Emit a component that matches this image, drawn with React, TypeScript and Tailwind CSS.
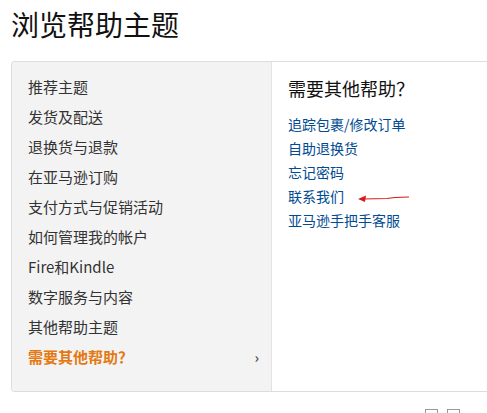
import React from "react";

const TOPICS = [
  "推荐主题",
  "发货及配送",
  "退换货与退款",
  "在亚马逊订购",
  "支付方式与促销活动",
  "如何管理我的帐户",
  "Fire和Kindle",
  "数字服务与内容",
  "其他帮助主题",
];

const HELP_LINKS = ["追踪包裹/修改订单", "自助退换货", "忘记密码", "联系我们", "亚马逊手把手客服"];

const FONT = { fontFamily: '"Microsoft YaHei", "Noto Sans CJK SC", "Noto Sans", sans-serif' };

export default function App() {
  return (
    <div className="w-[487px] h-[413px] overflow-hidden bg-white pl-[11px]" style={FONT}>
      <h1 className="pt-[6px] text-[28px] leading-[36px] text-[#111]">浏览帮助主题</h1>

      <div className="relative mt-[19px] flex h-[331px] rounded-l-[4px] border border-r-0 border-[#ddd]">
        {/* topic list */}
        <ul className="w-[260px] shrink-0 rounded-l-[4px] border-r border-[#e3e3e3] bg-[#f3f3f3] pl-[16px] pr-[12px] pt-[10px]">
          {TOPICS.map((t) => (
            <li key={t} className="h-[30px] text-[15px] leading-[30px] text-[#333]">
              {t}
            </li>
          ))}
          <li className="flex h-[30px] items-center justify-between text-[15px] font-bold leading-[30px] text-[#e47911]">
            <span>需要其他帮助？</span>
            <span className="text-[14px] font-bold text-[#555]">›</span>
          </li>
        </ul>

        {/* contact panel */}
        <div className="flex-1 pl-[16px] pt-[14px]">
          <h2 className="text-[18px] leading-[24px] text-[#111]">需要其他帮助？</h2>
          <ul className="mt-[12px]">
            {HELP_LINKS.map((l) => (
              <li key={l} className="text-[14px] leading-[24px] text-[#004b91]">
                {l}
              </li>
            ))}
          </ul>
        </div>

        {/* hand-drawn pointer */}
        <svg className="absolute left-[345px] top-[130px]" width="55" height="12" viewBox="0 0 55 12">
          <path d="M6 7 L30 6.5 L38 5.5 L52 5" stroke="#d91a1a" strokeWidth="1.2" fill="none" />
          <path d="M1 7 L9 3.5 L8 10 Z" fill="#d91a1a" />
        </svg>
      </div>

      <div className="mt-[17px] flex gap-[9px] pl-[414px]">
        <div className="h-[8px] w-[13px] border border-[#999]" />
        <div className="h-[8px] w-[13px] border border-[#999]" />
      </div>
    </div>
  );
}
